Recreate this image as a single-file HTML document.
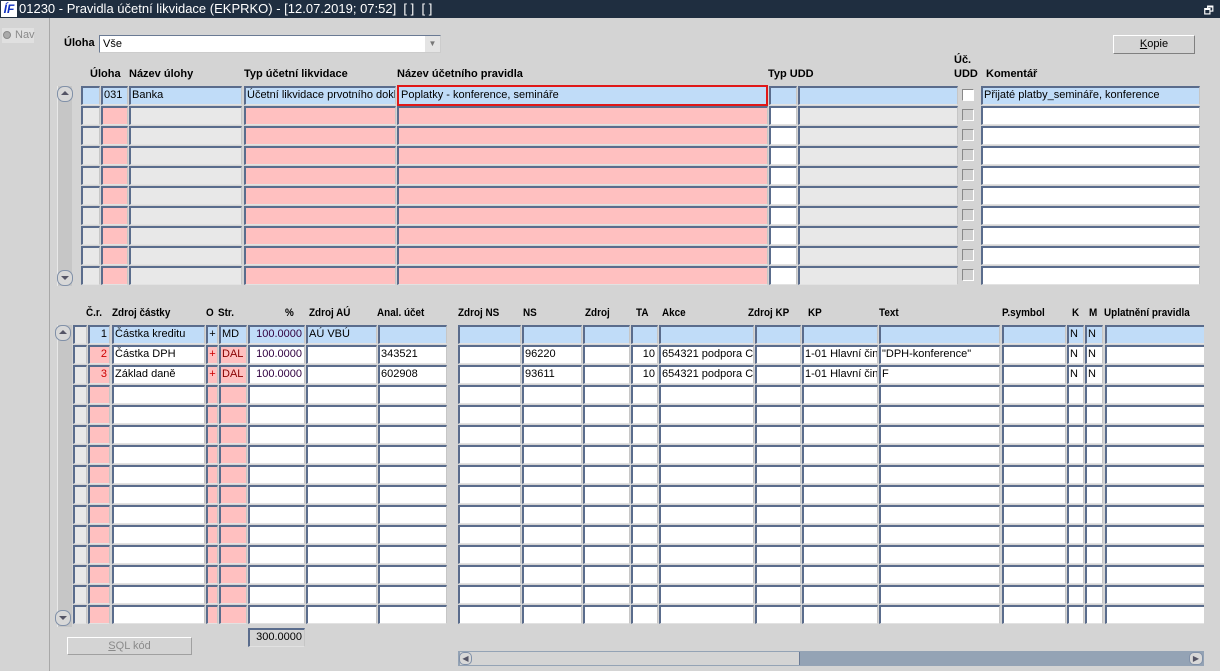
<!DOCTYPE html>
<html><head><meta charset="utf-8">
<style>
*{box-sizing:border-box;margin:0;padding:0}
body{width:1220px;height:671px;background:#d4d4d4;font-family:"Liberation Sans",Arial,sans-serif;font-size:11px;color:#000;position:relative;overflow:hidden}
.a{position:absolute}
.t{position:absolute;left:0;top:0;width:1220px;height:18px;background:#1f2e40;color:#fff;font-size:13px;line-height:18px;padding-left:19px;white-space:pre}
.c{position:absolute;height:19px;border-style:solid;border-width:2px 1px 1px 2px;border-color:#5a6c8c #c6c6c6 #e2e2e2 #5a6c8c;overflow:hidden;white-space:nowrap;line-height:15px;padding-left:1px}
.w{background:#fff}.p{background:#ffc0c0}.g{background:#e8e8e8}.b{background:#c0dcf8}
.h{position:absolute;font-weight:bold;white-space:nowrap}
.hn{position:absolute;font-weight:bold;white-space:nowrap;font-size:11px;transform:scaleX(.9);transform-origin:left}
.r{text-align:right;padding-right:2px}
.ck{position:absolute;width:12px;height:12px;border:1px solid #777;border-color:#888 #fff #fff #888;background:#d0d0d0}
.btn{position:absolute;border:1px solid #a0a0a0;border-color:#fff #808080 #808080 #fff;background:#d4d4d4;text-align:center;line-height:16px}
.sb{position:absolute;background:#c6c6c6;border-left:1px solid #e8e8e8}
.ab{position:absolute;width:16px;height:16px;border:1px solid #8090a8;border-radius:7px;background:#d8d8d8}
</style></head><body>
<div class="t">01230 - Pravidla účetní likvidace (EKPRKO) - [12.07.2019; 07:52]  [ ]  [ ]</div>
<div class="a" style="left:1px;top:1px;width:16px;height:16px;background:#fff;color:#1030c0;font:bold italic 12px 'Liberation Sans';line-height:16px;text-align:center">ÍF</div>
<div class="a" style="right:6px;top:2px;color:#fff;font-size:11px">🗗</div>
<div class="a" style="left:0;top:18px;width:50px;height:653px;background:#d4d4d4;border-right:1px solid #a8a8a8"></div>
<div class="a" style="left:2px;top:28px;width:32px;height:15px;background:#e0e0e0;color:#8a8a8a;line-height:14px;padding-left:13px">Nav</div>
<div class="a" style="left:3px;top:31px;width:8px;height:8px;border-radius:50%;background:#aaa;border:1px solid #888"></div>

<div class="h" style="left:64px;top:37px">Úloha</div>
<div class="a" style="left:99px;top:35px;width:342px;height:18px;background:#fff;border:1px solid #888;border-color:#6a7a94 #ccc #ccc #6a7a94;padding-left:3px;line-height:16px">Vše</div>
<div class="a" style="left:425px;top:36px;width:15px;height:16px;background:#e4e4e4;color:#777;font-size:8px;text-align:center;line-height:16px">▼</div>
<div class="btn" style="left:1113px;top:35px;width:82px;height:19px"><u>K</u>opie</div>

<div class="h" style="left:954px;top:54px">Úč.</div>
<div class="h" style="left:90px;top:68px">Úloha</div>
<div class="h" style="left:129px;top:68px">Název úlohy</div>
<div class="h" style="left:244px;top:68px">Typ účetní likvidace</div>
<div class="h" style="left:397px;top:68px">Název účetního pravidla</div>
<div class="h" style="left:768px;top:68px">Typ UDD</div>
<div class="h" style="left:954px;top:68px">UDD</div>
<div class="h" style="left:986px;top:68px">Komentář</div>

<div class="sb" style="left:57px;top:86px;width:15px;height:200px"></div>
<div class="ab" style="left:57px;top:86px"><div style="margin:4px 0 0 3px;width:0;height:0;border:4px solid transparent;border-bottom:4px solid #556;border-top:0"></div></div>
<div class="ab" style="left:57px;top:270px"><div style="margin:5px 0 0 3px;width:0;height:0;border:4px solid transparent;border-top:4px solid #556;border-bottom:0"></div></div>

<div id="top" class="a" style="left:0;top:0;width:1220px;height:671px"></div>
<div class="c b" style="left:101px;top:86px;width:27px">031</div>
<div class="c b" style="left:129px;top:86px;width:113px">Banka</div>
<div class="c b" style="left:244px;top:86px;width:152px">Účetní likvidace prvotního dokla</div>
<div class="a" style="left:397px;top:85px;width:371px;height:21px;border:2px solid #e01818;background:#c0dcf8;line-height:17px;padding-left:2px">Poplatky - konference, semináře</div>
<div class="c b" style="left:981px;top:86px;width:219px">Přijaté platby_semináře, konference</div>

<div class="hn" style="left:86px;top:307px">Č.r.</div>
<div class="hn" style="left:112px;top:307px">Zdroj částky</div>
<div class="hn" style="left:206px;top:307px">O</div>
<div class="hn" style="left:218px;top:307px">Str.</div>
<div class="hn" style="left:285px;top:307px">%</div>
<div class="hn" style="left:309px;top:307px">Zdroj AÚ</div>
<div class="hn" style="left:377px;top:307px">Anal. účet</div>
<div class="hn" style="left:458px;top:307px">Zdroj NS</div>
<div class="hn" style="left:523px;top:307px">NS</div>
<div class="hn" style="left:585px;top:307px">Zdroj</div>
<div class="hn" style="left:636px;top:307px">TA</div>
<div class="hn" style="left:662px;top:307px">Akce</div>
<div class="hn" style="left:748px;top:307px">Zdroj KP</div>
<div class="hn" style="left:808px;top:307px">KP</div>
<div class="hn" style="left:879px;top:307px">Text</div>
<div class="hn" style="left:1002px;top:307px">P.symbol</div>
<div class="hn" style="left:1072px;top:307px">K</div>
<div class="hn" style="left:1089px;top:307px">M</div>
<div class="hn" style="left:1104px;top:307px">Uplatnění pravidla</div>

<div class="sb" style="left:57px;top:325px;width:15px;height:302px"></div>
<div class="ab" style="left:55px;top:325px"><div style="margin:4px 0 0 3px;width:0;height:0;border:4px solid transparent;border-bottom:4px solid #556;border-top:0"></div></div>
<div class="ab" style="left:55px;top:610px"><div style="margin:5px 0 0 3px;width:0;height:0;border:4px solid transparent;border-top:4px solid #556;border-bottom:0"></div></div>

<div id="bot" class="a" style="left:0;top:0;width:1204px;height:671px;overflow:hidden"></div>

<div class="a" style="left:0;top:0;width:1204px;height:671px;overflow:hidden">
<div class="c b r" style="left:88px;top:325px;width:22px">1</div>
<div class="c b" style="left:112px;top:325px;width:93px">Částka kreditu</div>
<div class="c b" style="left:206px;top:325px;width:12px;text-align:center;padding:0">+</div>
<div class="c b" style="left:219px;top:325px;width:28px">MD</div>
<div class="c b r" style="left:248px;top:325px;width:57px;color:#300040">100.0000</div>
<div class="c b" style="left:306px;top:325px;width:71px">AÚ VBÚ</div>
<div class="c b" style="left:1067px;top:325px;width:17px">N</div>
<div class="c b" style="left:1085px;top:325px;width:18px">N</div>

<div class="c p r" style="left:88px;top:345px;width:22px;color:#c00">2</div>
<div class="c w" style="left:112px;top:345px;width:93px">Částka DPH</div>
<div class="c p" style="left:206px;top:345px;width:12px;text-align:center;padding:0;color:#c00">+</div>
<div class="c p" style="left:219px;top:345px;width:28px;color:#800">DAL</div>
<div class="c w r" style="left:248px;top:345px;width:57px;color:#300040">100.0000</div>
<div class="c w" style="left:378px;top:345px;width:69px">343521</div>
<div class="c w" style="left:522px;top:345px;width:60px">96220</div>
<div class="c w r" style="left:631px;top:345px;width:27px">10</div>
<div class="c w" style="left:659px;top:345px;width:95px">654321 podpora CZ</div>
<div class="c w" style="left:802px;top:345px;width:76px">1-01 Hlavní čin</div>
<div class="c w" style="left:879px;top:345px;width:121px">"DPH-konference"</div>
<div class="c w" style="left:1067px;top:345px;width:17px">N</div>
<div class="c w" style="left:1085px;top:345px;width:18px">N</div>

<div class="c p r" style="left:88px;top:365px;width:22px;color:#c00">3</div>
<div class="c w" style="left:112px;top:365px;width:93px">Základ daně</div>
<div class="c p" style="left:206px;top:365px;width:12px;text-align:center;padding:0;color:#c00">+</div>
<div class="c p" style="left:219px;top:365px;width:28px;color:#800">DAL</div>
<div class="c w r" style="left:248px;top:365px;width:57px;color:#300040">100.0000</div>
<div class="c w" style="left:378px;top:365px;width:69px">602908</div>
<div class="c w" style="left:522px;top:365px;width:60px">93611</div>
<div class="c w r" style="left:631px;top:365px;width:27px">10</div>
<div class="c w" style="left:659px;top:365px;width:95px">654321 podpora CZ</div>
<div class="c w" style="left:802px;top:365px;width:76px">1-01 Hlavní čin</div>
<div class="c w" style="left:879px;top:365px;width:121px">F</div>
<div class="c w" style="left:1067px;top:365px;width:17px">N</div>
<div class="c w" style="left:1085px;top:365px;width:18px">N</div>
</div>

<div class="c r" style="left:248px;top:628px;width:57px;background:#d4d4d4">300.0000</div>
<div class="btn" style="left:67px;top:637px;width:125px;height:18px;color:#8a8a8a;border-color:#fff #a0a0a0 #a0a0a0 #fff"><u>S</u>QL kód</div>

<div class="a" style="left:458px;top:651px;width:746px;height:15px;background:#94a3b5"></div>
<div class="a" style="left:460px;top:652px;width:340px;height:13px;background:#d4d4d4;border-right:1px solid #6a7a94"></div>
<div class="a" style="left:459px;top:652px;width:13px;height:13px;background:#d8d8d8;border:1px solid #8090a8;border-radius:5px;color:#556;font-size:8px;line-height:11px;text-align:center">◀</div>
<div class="a" style="left:1189px;top:652px;width:14px;height:13px;background:#d8d8d8;border:1px solid #8090a8;border-radius:5px;color:#556;font-size:8px;line-height:11px;text-align:center">▶</div>

<script>
function cell(par,x,y,w,cls){var d=document.createElement('div');d.className='c '+cls;d.style.left=x+'px';d.style.top=y+'px';d.style.width=w+'px';par.appendChild(d);}
var tp=document.getElementById('top');
var tc=[[81,19,'g'],[101,27,'p'],[129,113,'g'],[244,152,'p'],[397,371,'p'],[769,28,'w'],[798,160,'g'],[981,219,'w']];
for(var r=0;r<10;r++){var y=86+r*20;tc.forEach(function(c){cell(tp,c[0],y,c[1],r==0?'b':c[2]);});
 var k=document.createElement('div');k.className='ck';k.style.left='962px';k.style.top=(y+3)+'px';if(r==0){k.style.background='#fff';}tp.appendChild(k);}
var bp=document.getElementById('bot');
var bc=[[73,14,'g'],[88,22,'p'],[112,93,'w'],[206,12,'p'],[219,28,'p'],[248,57,'w'],[306,71,'w'],[378,69,'w'],[458,63,'w'],[522,60,'w'],[583,47,'w'],[631,27,'w'],[659,95,'w'],[755,46,'w'],[802,76,'w'],[879,121,'w'],[1002,64,'w'],[1067,17,'w'],[1085,18,'w'],[1105,120,'w']];
for(var r=0;r<15;r++){var y=325+r*20;bc.forEach(function(c){cell(bp,c[0],y,c[1],r==0?(c[0]==73?'g':'b'):c[2]);});}
</script>
</body></html>
